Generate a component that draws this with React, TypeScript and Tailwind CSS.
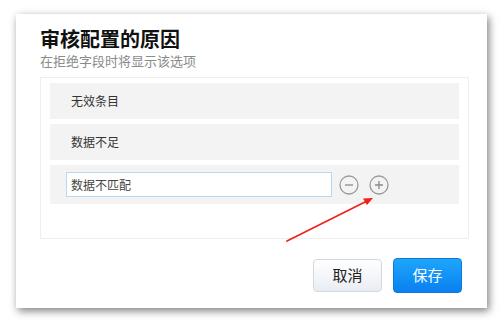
export default function App() {
  const reasons = ['无效条目', '数据不足'];

  return (
    <div
      className="relative h-[322px] w-[503px] overflow-hidden bg-white pl-[16px] pt-[14px]"
      style={{ fontFamily: '"Noto Sans CJK SC", "Noto Sans", sans-serif' }}
    >
      <div className="flex h-[294px] w-[471px] flex-col bg-white shadow-[2px_3px_8px_rgba(0,0,0,0.5)]">
        {/* 标题 */}
        <div className="flex flex-col gap-[1px] pl-[24px] pt-[12px]">
          <h2 className="text-[20px] font-bold leading-[26px] text-[#111]">审核配置的原因</h2>
          <p className="text-[13px] leading-[15px] text-[#8a8a8a]">在拒绝字段时将显示该选项</p>
        </div>

        {/* 原因列表 */}
        <div className="ml-[24px] mr-[18px] mt-[9px] h-[162px] border border-[#eeeeee] px-[9px] pt-[5px]">
          <div className="flex flex-col gap-[5px]">
            {reasons.map((reason) => (
              <div
                key={reason}
                className="flex h-[36px] items-center bg-[#f3f3f3] pl-[21px] text-[12px] text-[#333]"
              >
                {reason}
              </div>
            ))}
            <div className="flex h-[39px] items-center bg-[#f3f3f3] pl-[16px]">
              <input
                defaultValue="数据不匹配"
                className="h-[25px] w-[266px] border border-[#b9d9f3] bg-white px-[4px] text-[12px] text-[#444] outline-none"
              />
              <button className="ml-[7px] flex size-[20px] items-center justify-center">
                <svg width="20" height="20" viewBox="0 0 20 20" fill="none">
                  <circle cx="10" cy="10" r="9" stroke="#9a9a9a" strokeWidth="1.3" />
                  <path d="M6 10h8" stroke="#8a8a8a" strokeWidth="1.3" />
                </svg>
              </button>
              <button className="ml-[10px] flex size-[20px] items-center justify-center">
                <svg width="20" height="20" viewBox="0 0 20 20" fill="none">
                  <circle cx="10" cy="10" r="9" stroke="#9a9a9a" strokeWidth="1.3" />
                  <path d="M6 10h8M10 6v8" stroke="#8a8a8a" strokeWidth="1.3" />
                </svg>
              </button>
            </div>
          </div>
        </div>

        {/* 按钮 */}
        <div className="mt-[19px] flex h-[35px] items-center justify-end gap-[11px] pr-[25px]">
          <button className="h-[33px] w-[69px] rounded-[4px] border border-[#d3d8e0] bg-gradient-to-b from-[#ffffff] to-[#e9edf3] text-[15px] text-[#222]">
            取消
          </button>
          <button className="h-[35px] w-[69px] rounded-[4px] border border-[#0a79e0] bg-gradient-to-b from-[#1ea6fb] to-[#0a80f0] text-[15px] text-white">
            保存
          </button>
        </div>
      </div>

      {/* 红色箭头 */}
      <svg className="pointer-events-none absolute left-0 top-0" width="503" height="322">
        <path d="M287 241 L366 201.5" stroke="#f0201a" strokeWidth="1.8" strokeLinecap="round" />
        <path d="M373 198 L363 198.5 L367 205 Z" fill="#f0201a" />
      </svg>
    </div>
  );
}
